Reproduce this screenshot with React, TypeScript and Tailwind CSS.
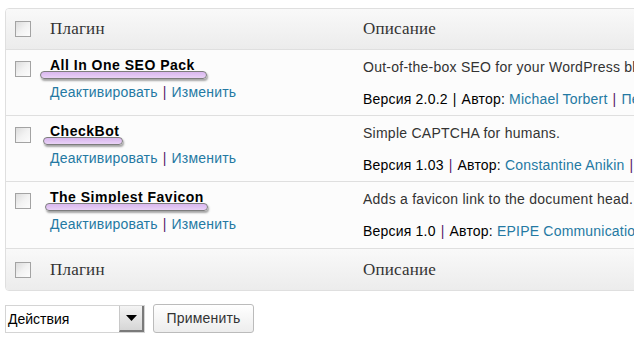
import React from "react";

type Plugin = {
  name: string;
  pill: { left: number; width: number };
  desc: string;
  version: string;
  author: string;
  tail?: string;
};

const plugins: Plugin[] = [
  {
    name: "All In One SEO Pack",
    pill: { left: -10, width: 167 },
    desc: "Out-of-the-box SEO for your WordPress blog.",
    version: "2.0.2",
    author: "Michael Torbert",
    tail: "Перейти на страницу плагина",
  },
  {
    name: "CheckBot",
    pill: { left: -7, width: 80 },
    desc: "Simple CAPTCHA for humans.",
    version: "1.03",
    author: "Constantine Anikin",
    tail: "Перейти на страницу плагина",
  },
  {
    name: "The Simplest Favicon",
    pill: { left: -5, width: 163 },
    desc: "Adds a favicon link to the document head.",
    version: "1.0",
    author: "EPIPE Communications",
  },
];

function Checkbox() {
  return (
    <span className="block w-[16px] h-[16px] border border-[#a3a3a3] bg-gradient-to-br from-[#dcdcdc] via-[#f2f2f2] to-[#fcfcfc]" />
  );
}

function HeadRow({ bottom }: { bottom?: boolean }) {
  return (
    <div
      className={`grid grid-cols-[44px_313px_1fr] h-[41px] items-center bg-gradient-to-b from-[#f9f9f9] to-[#ececec] ${
        bottom ? "" : "border-b border-[#dfdfdf]"
      }`}
    >
      <div className="pl-[9px]">
        <Checkbox />
      </div>
      <div className="font-['Liberation_Serif',serif] text-[17px] text-[#333] tracking-[0.2px]">Плагин</div>
      <div className="font-['Liberation_Serif',serif] text-[17px] text-[#333] tracking-[0.2px]">Описание</div>
    </div>
  );
}

export default function App() {
  return (
    <div className="w-[634px] h-[350px] overflow-hidden bg-white font-['Liberation_Sans',Arial,sans-serif] text-[14px] text-[#333]">
      <div className="pt-[8px] pl-[5px]">
        <div className="w-[720px] border border-[#dfdfdf] rounded-[4px] overflow-hidden">
          <HeadRow />
          {plugins.map((p, i) => (
            <div
              key={p.name}
              className={`grid grid-cols-[44px_313px_1fr] bg-[#fcfcfc] border-b border-[#dfdfdf] ${
                i === 2 ? "h-[67px]" : "h-[66px]"
              }`}
            >
              <div className="pl-[9px] pt-[11px]">
                <Checkbox />
              </div>
              <div className="pt-[5px]">
                <div className="relative inline-block leading-[18px] font-bold text-black tracking-[0.5px]">
                  {p.name}
                  <span
                    className="absolute top-[15px] h-[8px] rounded-full border border-[#7d7d7d] bg-gradient-to-b from-[#d9b6ef] to-[#e9d2f6] shadow-[1px_2px_2px_rgba(0,0,0,0.35)]"
                    style={{ left: p.pill.left, width: p.pill.width }}
                  />
                </div>
                <div className="mt-[7px] leading-[18px] tracking-[0.2px]">
                  <span className="text-[#2479a3]">Деактивировать</span>
                  <span className="text-[#5b1a6b] px-[5px]">|</span>
                  <span className="text-[#2479a3]">Изменить</span>
                </div>
              </div>
              <div className="pt-[8px] whitespace-nowrap">
                <div className="leading-[18px] tracking-[0.25px] text-[#333]">{p.desc}</div>
                <div className="mt-[14px] leading-[18px] tracking-[0.2px] text-black">
                  Версия {p.version}
                  <span className={`px-[5px] ${i === 0 ? "text-black" : "text-[#5b1a6b]"}`}>|</span>
                  Автор: <span className="text-[#2479a3]">{p.author}</span>
                  {p.tail && (
                    <>
                      <span className="text-[#5b1a6b] px-[5px]">|</span>
                      <span className="text-[#2479a3]">{p.tail}</span>
                    </>
                  )}
                </div>
              </div>
            </div>
          ))}
          <HeadRow bottom />
        </div>
      </div>

      <div className="flex items-center gap-[8px] pl-[5px] mt-[13px]">
        <div className="flex w-[140px] h-[28px] border border-[#d4d4d4] bg-white">
          <span className="flex-1 pl-[2px] leading-[26px] text-[14px] text-black">Действия</span>
          <span className="w-[25px] h-full flex items-center justify-center bg-gradient-to-b from-[#f4f4f4] to-[#d6d6d6] border-l border-[#c8c8c8] border-r-2 border-b-2 border-r-[#7a7a7a] border-b-[#7a7a7a]">
            <svg width="11" height="6" viewBox="0 0 11 6">
              <path d="M0 0 H11 L5.5 6 Z" fill="#000" />
            </svg>
          </span>
        </div>
        <button className="w-[101px] h-[29px] rounded-[3px] border border-[#bbb] bg-gradient-to-b from-white to-[#ededed] text-[14px] text-[#333] tracking-[0.2px]">
          Применить
        </button>
      </div>
    </div>
  );
}
